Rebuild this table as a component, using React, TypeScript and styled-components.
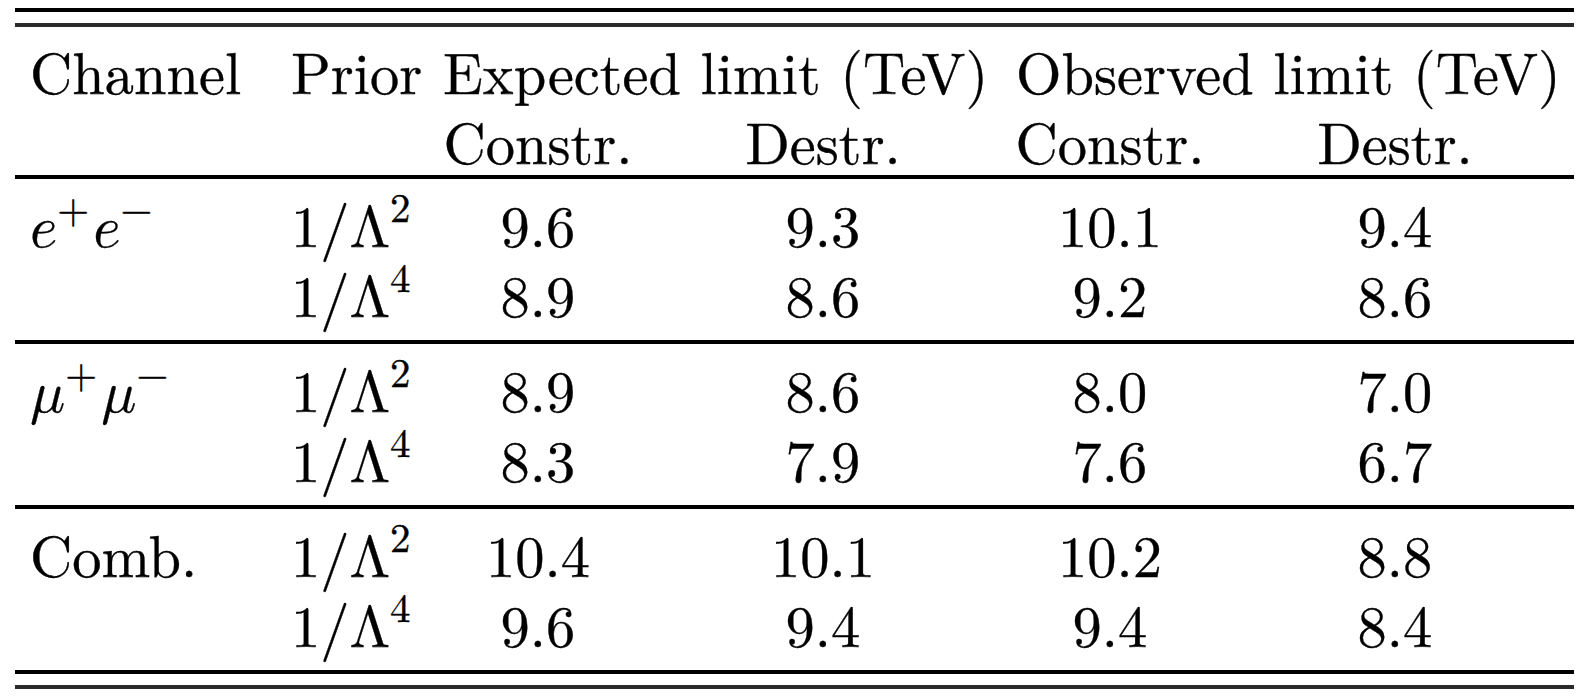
import * as React from 'react'
import styled, { createGlobalStyle } from 'styled-components'

const GlobalStyle = createGlobalStyle`
  html, body {
    margin: 0;
    padding: 0;
    background: #fff;
  }
`

type Row = { constrExp: string; destrExp: string; constrObs: string; destrObs: string }
type Section = { channel: React.ReactNode; rows: [Row, Row] }

// math-mode pieces use Latin Modern Math so the italics look like TeX
const MathText = styled.span`
  font-family: 'Latin Modern Math', 'Latin Modern Roman', serif;
  line-height: 0;
`

const Sup = styled.sup<{ $charge?: boolean }>`
  font-size: 0.7em;
  line-height: 0;
  vertical-align: ${p => (p.$charge ? '0.58em' : '0.62em')};
  margin-right: ${p => (p.$charge ? '4px' : '0')};
`

const sections: Section[] = [
  {
    channel: (
      <MathText>
        𝑒<Sup $charge>+</Sup>𝑒<Sup $charge>−</Sup>
      </MathText>
    ),
    rows: [
      { constrExp: '9.6', destrExp: '9.3', constrObs: '10.1', destrObs: '9.4' },
      { constrExp: '8.9', destrExp: '8.6', constrObs: '9.2', destrObs: '8.6' },
    ],
  },
  {
    channel: (
      <MathText>
        𝜇<Sup $charge>+</Sup>𝜇<Sup $charge>−</Sup>
      </MathText>
    ),
    rows: [
      { constrExp: '8.9', destrExp: '8.6', constrObs: '8.0', destrObs: '7.0' },
      { constrExp: '8.3', destrExp: '7.9', constrObs: '7.6', destrObs: '6.7' },
    ],
  },
  {
    channel: 'Comb.',
    rows: [
      { constrExp: '10.4', destrExp: '10.1', constrObs: '10.2', destrObs: '8.8' },
      { constrExp: '9.6', destrExp: '9.4', constrObs: '9.4', destrObs: '8.4' },
    ],
  },
]

const priors = ['2', '4']

export default function App() {
  return (
    <>
      <GlobalStyle />
      <Table>
        <DoubleRule>
          <Rule />
          <Rule $tone='#2a2a2a' />
        </DoubleRule>
        <Block $head>
          <Cell $pad={15}>Channel</Cell>
          <Cell $pad={14}>Prior</Cell>
          <SpanCell $pad={15}>Expected limit (TeV)</SpanCell>
          <SpanCell $pad={18}>Observed limit (TeV)</SpanCell>
          <Cell />
          <Cell />
          <Cell $center>Constr.</Cell>
          <Cell $center>Destr.</Cell>
          <Cell $center>Constr.</Cell>
          <Cell $center>Destr.</Cell>
        </Block>
        {sections.map((s, i) => (
          <React.Fragment key={i}>
            <Rule />
            <Block>
              {s.rows.map((r, j) => (
                <React.Fragment key={j}>
                  <Cell $pad={15}>{j === 0 ? s.channel : null}</Cell>
                  <Cell $pad={14}>
                    1/Λ<Sup>{priors[j]}</Sup>
                  </Cell>
                  <Cell $center>{r.constrExp}</Cell>
                  <Cell $center>{r.destrExp}</Cell>
                  <Cell $center>{r.constrObs}</Cell>
                  <Cell $center>{r.destrObs}</Cell>
                </React.Fragment>
              ))}
            </Block>
          </React.Fragment>
        ))}
        <DoubleRule>
          <Rule />
          <Rule $tone='#2a2a2a' />
        </DoubleRule>
      </Table>
    </>
  )
}

const Table = styled.div`
  padding: 8px 15px 0;
  font-family: 'Latin Modern Roman', 'Liberation Serif', serif;
  font-size: 58.5px;
  color: #000;
  -webkit-text-stroke: 0.35px #000;
`

const DoubleRule = styled.div`
  display: flex;
  flex-direction: column;
  gap: 11px;
`

const Rule = styled.div<{ $tone?: string }>`
  height: 4px;
  background: ${p => p.$tone || '#000'};
`

const Block = styled.div<{ $head?: boolean }>`
  display: grid;
  grid-template-columns: 262px 151px 220px 350px 224px 346px;
  grid-auto-rows: 70px;
  padding: ${p => (p.$head ? '8px 0 0' : '9px 0 12px')};
`

const Cell = styled.div<{ $pad?: number; $center?: boolean }>`
  line-height: 70px;
  white-space: nowrap;
  padding-left: ${p => (p.$pad ? `${p.$pad}px` : '0')};
  text-align: ${p => (p.$center ? 'center' : 'left')};
`

const SpanCell = styled(Cell)`
  grid-column: span 2;
`
